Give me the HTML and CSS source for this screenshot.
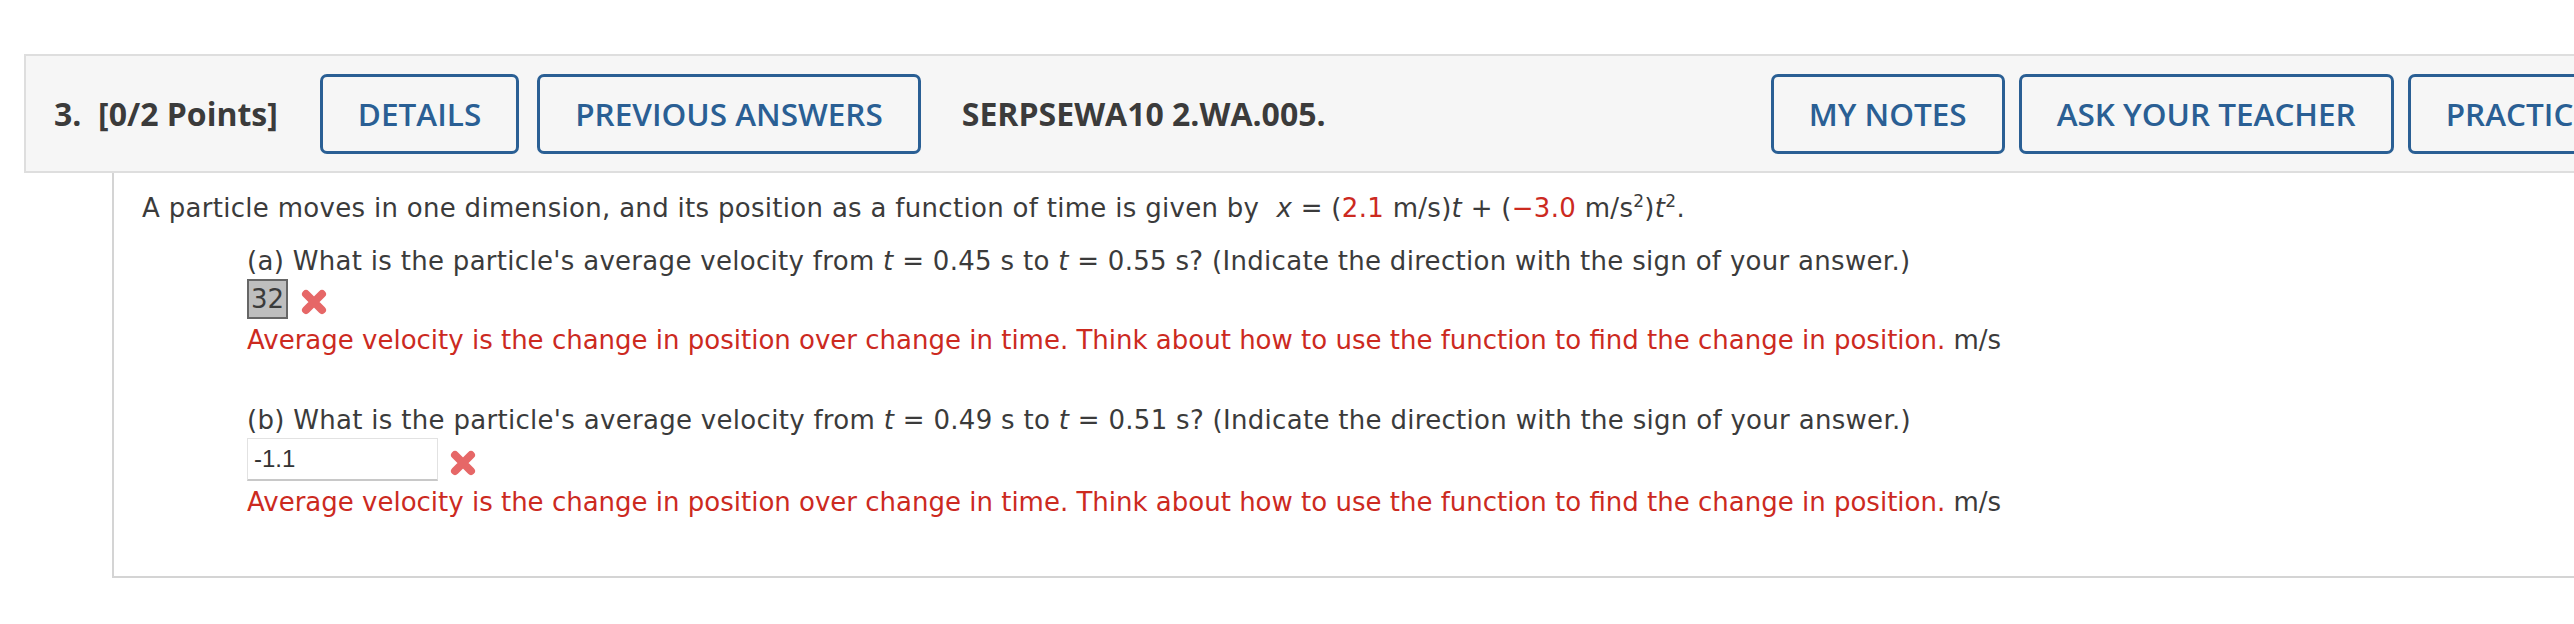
FILE: index.html
```html
<!DOCTYPE html>
<html lang="en">
<head>
  <meta charset="UTF-8" />
  <title>SERPSEWA10 2.WA.005.</title>
  <link rel="stylesheet" href="styles.css">
</head>
<body>
  <div class="page">
    <div class="question-head">
      <span class="q-title">3.&nbsp; [0/2 Points]</span>
      <button class="btn">DETAILS</button>
      <button class="btn">PREVIOUS ANSWERS</button>
      <span class="q-code">SERPSEWA10 2.WA.005.</span>
      <div class="head-tools">
        <button class="btn">MY NOTES</button>
        <button class="btn">ASK YOUR TEACHER</button>
        <button class="btn">PRACTICE ANOTHER</button>
      </div>
    </div>

    <div class="question-body">
      <p class="intro">A particle moves in one dimension, and its position as a function of time is given by &nbsp;<i>x</i> = (<span class="val">2.1</span> m/s)<i>t</i> + (<span class="val">&minus;3.0</span> m/s<sup>2</sup>)<i>t</i><sup>2</sup>.</p>

      <div class="part">
        <p class="prompt">(a) What is the particle's average velocity from <i>t</i> = 0.45 s to <i>t</i> = 0.55 s? (Indicate the direction with the sign of your answer.)</p>
        <div class="answer-row">
          <span class="answer-box">32</span>
          <svg class="wrong" width="28" height="26" viewBox="0 0 28 26"><path d="M6 5 L22 21 M22 5 L6 21" /></svg>
        </div>
        <p class="feedback"><span class="hint">Average velocity is the change in position over change in time. Think about how to use the function to find the change in position.</span> m/s</p>
      </div>

      <div class="part part-b">
        <p class="prompt">(b) What is the particle's average velocity from <i>t</i> = 0.49 s to <i>t</i> = 0.51 s? (Indicate the direction with the sign of your answer.)</p>
        <div class="answer-row">
          <input class="answer-input" type="text" value="-1.1">
          <svg class="wrong wrong-b" width="28" height="26" viewBox="0 0 28 26"><path d="M6 5 L22 21 M22 5 L6 21" /></svg>
        </div>
        <p class="feedback"><span class="hint">Average velocity is the change in position over change in time. Think about how to use the function to find the change in position.</span> m/s</p>
      </div>
    </div>
  </div>
</body>
</html>
```

FILE: styles.css
```css
body {
  margin: 0;
  background-color: #fff;
  color: #3b3b3b;
  font-family: 'DejaVu Sans', Verdana, sans-serif;
  overflow: hidden;
}

.page {
  width: 3200px;
  padding: 54px 0 0 24px;
}

.question-head {
  display: flex;
  align-items: center;
  height: 115px;
  padding: 0 0 0 28px;
  background-color: #f6f6f6;
  border: 2px solid #dedede;
  font-family: 'Open Sans', sans-serif;
  white-space: nowrap;
}

.question-head > * {
  flex-shrink: 0;
}

.q-title {
  font-size: 32px;
  font-weight: 700;
  color: #3b3b3b;
  margin-right: 42px;
}

.btn {
  flex-shrink: 0;
  height: 80px;
  padding: 0 35px;
  margin-right: 18px;
  background: none;
  border: 3px solid #2a5f94;
  border-radius: 7px;
  color: #2a5f94;
  font-family: 'Open Sans', sans-serif;
  font-size: 31.5px;
  font-weight: 600;
  white-space: nowrap;
}

.q-code {
  margin-left: 23px;
  font-size: 32px;
  font-weight: 700;
  color: #3b3b3b;
}

.head-tools {
  display: flex;
  margin-left: 445px;
}

.head-tools .btn {
  margin-right: 14px;
}

.question-body {
  margin-left: 88px;
  padding: 17px 0 56px 28px;
  border-left: 2px solid #d4d4d4;
  border-bottom: 2px solid #d4d4d4;
  font-size: 26px;
  line-height: 36px;
}

.question-body p {
  margin: 0;
}

.intro {
  margin-bottom: 17px !important;
}

.intro, .prompt {
  letter-spacing: 0.3px;
}

.val, .hint {
  color: #cc2a1f;
}

sup {
  font-size: 17px;
  line-height: 0;
}

.part {
  padding-left: 105px;
}

.part-b {
  margin-top: 44px;
}

.answer-row {
  display: flex;
  align-items: center;
  height: 40px;
  margin-bottom: 3px;
}

.answer-box {
  height: 36px;
  padding: 0 2px;
  line-height: 36px;
  background-color: #bebebe;
  border: 2px solid #666;
}

.wrong {
  margin: 6px 0 0 12px;
}

.wrong path {
  stroke: #e66767;
  stroke-width: 8;
  stroke-linecap: round;
  fill: none;
}

.part-b .answer-row {
  height: 43px;
}

.answer-input {
  box-sizing: border-box;
  width: 191px;
  height: 43px;
  margin: 0;
  padding: 0 6px;
  border: 1px solid #e2e2e2;
  border-bottom: 2px solid #c8c8c8;
  font-family: 'Liberation Sans', Arial, sans-serif;
  font-size: 24px;
  color: #333;
}

.wrong-b {
  margin: 6px 0 0 11px;
}
```
